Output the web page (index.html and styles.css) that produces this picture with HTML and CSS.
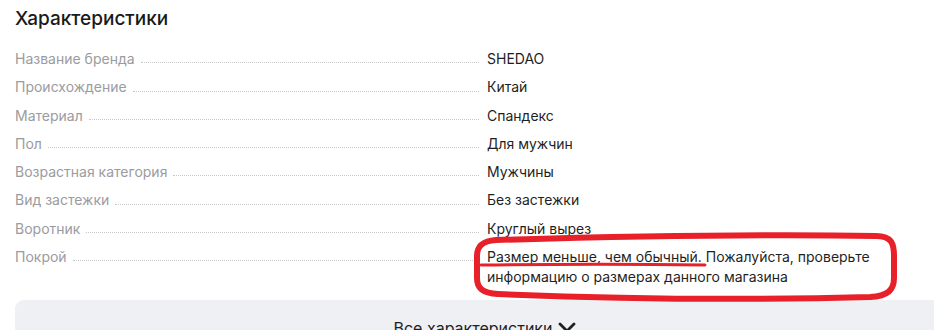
FILE: index.html
```html
<!DOCTYPE html>
<html lang="ru">
<head>
<meta charset="utf-8">
<title>Характеристики</title>
<link rel="stylesheet" href="styles.css">
</head>
<body>
<div class="page">
  <h2 class="title">Характеристики</h2>
  <dl class="specs">
    <div class="row"><dt class="label"><span>Название бренда</span><i class="leader"></i></dt><dd class="value">SHEDAO</dd></div>
    <div class="row"><dt class="label"><span>Происхождение</span><i class="leader"></i></dt><dd class="value">Китай</dd></div>
    <div class="row"><dt class="label"><span>Материал</span><i class="leader"></i></dt><dd class="value">Спандекс</dd></div>
    <div class="row"><dt class="label"><span>Пол</span><i class="leader"></i></dt><dd class="value">Для мужчин</dd></div>
    <div class="row"><dt class="label"><span>Возрастная категория</span><i class="leader"></i></dt><dd class="value">Мужчины</dd></div>
    <div class="row"><dt class="label"><span>Вид застежки</span><i class="leader"></i></dt><dd class="value">Без застежки</dd></div>
    <div class="row"><dt class="label"><span>Воротник</span><i class="leader"></i></dt><dd class="value">Круглый вырез</dd></div>
    <div class="row"><dt class="label"><span>Покрой</span><i class="leader"></i></dt><dd class="value">Размер меньше, чем обычный. Пожалуйста, проверьте информацию о размерах данного магазина</dd></div>
  </dl>
  <button class="all-btn" type="button">Все характеристики
    <svg class="chev" width="18" height="12" viewBox="0 0 18 12"><polyline points="2,2 9,9 16,2" fill="none" stroke="#1f1f1f" stroke-width="2.8" stroke-linecap="round" stroke-linejoin="round"/></svg>
  </button>
  <svg class="annot" width="934" height="330" viewBox="0 0 934 330">
    <path d="M496 240 C 600 237, 760 234, 876 236 C 892 236, 894 244, 894 256 L 894 278 C 894 290, 888 296, 870 297 C 760 300, 620 299, 498 294 C 482 293, 477 288, 477 278 L 477 256 C 477 246, 482 241, 496 240 Z" fill="none" stroke="#e8202a" stroke-width="6"/>
    <path d="M481 265 C 560 264, 640 264, 705 265" fill="none" stroke="#e8202a" stroke-width="3" stroke-linecap="round"/>
  </svg>
</div>
</body>
</html>
```
FILE: styles.css
```css
html, body {
  margin: 0;
  padding: 0;
  background: #ffffff;
}
body {
  font-family: Inter, "Noto Sans", "Liberation Sans", sans-serif;
  color: #1f1f1f;
  overflow: hidden;
}
.page {
  position: relative;
  width: 934px;
  height: 330px;
  overflow: hidden;
  padding-left: 15px;
  box-sizing: border-box;
}
.title {
  margin: 0;
  padding-top: 7px;
  font-size: 19px;
  line-height: 24px;
  font-weight: 500;
  color: #1a1a1a;
}
.specs {
  margin: 18px 0 0 0;
  display: flex;
  flex-direction: column;
  gap: 8px;
}
.row {
  display: grid;
  grid-template-columns: 472px 440px;
  align-items: start;
  font-size: 14px;
  line-height: 20.3px;
}
.label {
  display: flex;
  align-items: flex-end;
  height: 20.3px;
  color: #9b9ba0;
  white-space: nowrap;
}
.leader {
  flex: 1;
  margin: 0 8px 6px 6px;
  border-bottom: 1px dotted #c9c9cc;
}
.value {
  margin: 0;
  color: #1f1f1f;
}
.all-btn {
  display: flex;
  align-items: center;
  justify-content: center;
  gap: 6px;
  margin-top: 12px;
  width: 940px;
  height: 60px;
  padding: 0 0 4px 0;
  border: none;
  border-radius: 9px;
  background: #eef0f4;
  font-family: inherit;
  font-size: 16px;
  color: #1f1f1f;
}
.chev {
  display: block;
}
.annot {
  position: absolute;
  left: 0;
  top: 0;
  pointer-events: none;
}
```
